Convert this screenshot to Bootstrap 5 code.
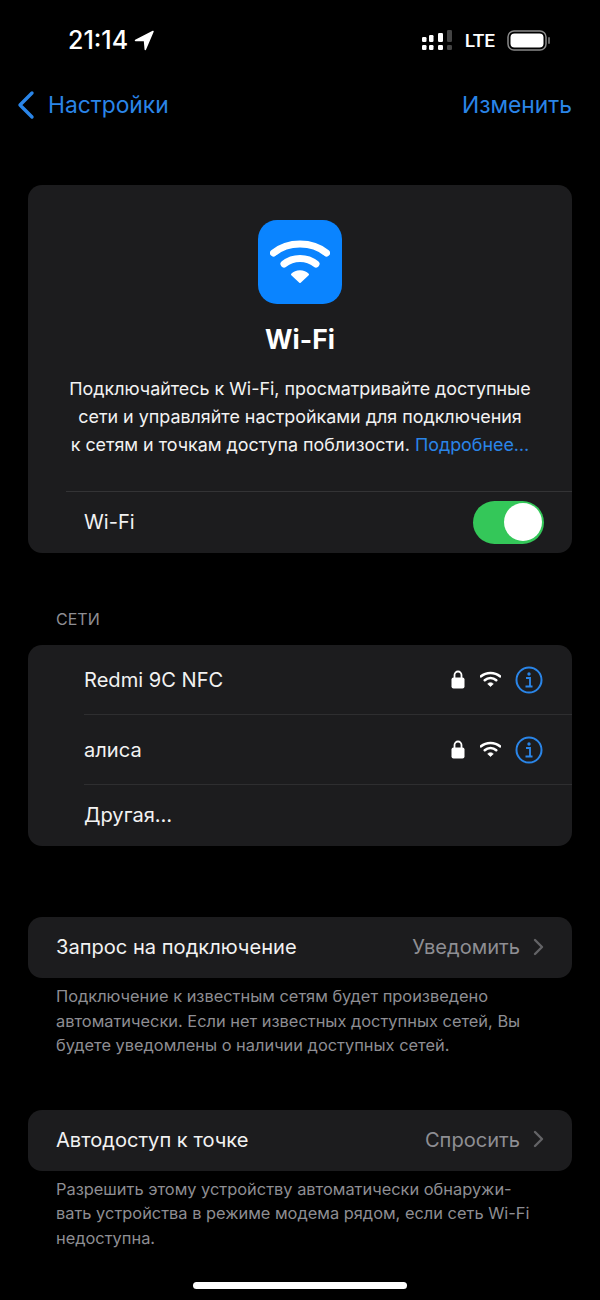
<!DOCTYPE html>
<html lang="ru">
<head>
<meta charset="utf-8">
<title>Wi-Fi</title>
<link rel="stylesheet" href="https://cdn.jsdelivr.net/npm/bootstrap@5.3.0/dist/css/bootstrap.min.css">
<style>
html,body{background:#000;margin:0}
body{width:600px;height:1300px;overflow:hidden;font-family:Inter,"Noto Sans",sans-serif;color:#fff;font-size:20px}
.sbar{height:80px;padding:0 49px 0 68px}
.clock{font-size:25px;font-weight:500;line-height:1}
.lte{font-size:19px;font-weight:500;line-height:1;font-family:Roboto,sans-serif;margin:0 12px}
.navrow{height:50px;padding:0 28px 0 16px;color:#2a85e8;font-size:22.8px}
.backlabel{margin-left:12px}
.panel{background:#1c1c1e;border-radius:14px;margin:0 28px}
.hero{height:368px;margin-top:55px;overflow:hidden}
.appicon{width:84px;height:84px;border-radius:19px;background:#0a84ff;margin-top:35px}
.herotitle{font-size:26.5px;font-weight:700;line-height:34px;margin-top:18px}
.herotext{font-size:17.9px;line-height:28px;margin-top:19px;color:#f2f2f2;padding:0 10px;white-space:nowrap}
.herotext a{color:#2a85e8;text-decoration:none}
.herorow{margin-left:38px;border-top:1px solid #333335;margin-top:32px;height:62px;padding:0 28px 0 18px}
.rowlabel{font-size:20.1px;color:#f2f2f2}
.toggle{width:71px;height:43px;background:#34c759;border-radius:22px;padding:2.5px;margin-bottom:1px}
.knob{width:38px;height:38px;background:#fff;border-radius:50%;margin-left:auto}
.caption{font-size:16px;color:#8e8e93;padding-left:56px;line-height:20px;margin-top:56px;margin-bottom:16px}
.nets{height:201px;overflow:hidden}
.netrow{margin-left:56px;padding-right:29px;border-bottom:1px solid #2e2e30;height:70px}
.netlabel{padding-top:2px}
.netrow.last{border:0;height:61px;padding-bottom:1px}
.netgap{margin-left:15px}
.infogap{margin-left:14px}
.setrow{height:61px;padding:0 27px 0 28px}
.val{color:#8e8e93}
.chevgap{margin-left:11px;margin-bottom:2px}
.foot{font-size:16.4px;line-height:24.5px;color:#8e8e93;padding:0 20px 0 56px;margin-top:6px;white-space:nowrap}
.one{margin-top:71px}
.two{margin-top:52px}
.homebar{width:214px;height:7px;border-radius:4px;background:#fff;margin:32px auto 0}
</style>
</head>
<body>
<div class="sbar d-flex align-items-center justify-content-between">
  <div class="d-flex align-items-center gap-1"><span class="clock">21:14</span>
    <svg width="23" height="23" viewBox="0 0 23 23"><path d="M21 2.500 3.500 11.500h9l.8 9z" fill="#fff" stroke="#fff" stroke-width="1.500" stroke-linejoin="round"/></svg></div>
  <div class="d-flex align-items-center">
    <svg width="31" height="20" viewBox="0 0 31 20" fill="#fff"><rect x="0" y="7" width="4.500" height="5" rx="1.200"/><rect x="0" y="15" width="4.500" height="5" rx="1.200"/><rect x="7" y="5" width="4.500" height="7" rx="1.200"/><rect x="7" y="15" width="4.500" height="5" rx="1.200"/><rect x="16" y="3" width="5" height="9" rx="1.200"/><rect x="16" y="15" width="5" height="5" rx="1.200"/><rect x="25" y="0" width="5" height="12" rx="1.200" fill="#444"/><rect x="25" y="15" width="5" height="5" rx="1.200" fill="#444"/></svg>
    <span class="lte">LTE</span>
    <svg width="44" height="21" viewBox="0 0 44 21"><rect x="1" y="1" width="38" height="19" rx="6" fill="none" stroke="#8a8a8a" stroke-width="1.500"/><rect x="3.500" y="3.500" width="33" height="14" rx="4" fill="#fff"/><rect x="41" y="7" width="2" height="7" rx="1" fill="#666"/></svg>
  </div>
</div>
<div class="navrow d-flex align-items-center justify-content-between">
  <div class="d-flex align-items-center"><svg width="20" height="30" viewBox="0 0 20 30"><path d="M16 3 4 15 16 27" fill="none" stroke="#2a85e8" stroke-width="3.400" stroke-linecap="round" stroke-linejoin="round"/></svg><span class="backlabel">Настройки</span></div>
  <span>Изменить</span>
</div>

<div class="panel hero text-center">
  <div class="appicon mx-auto d-flex align-items-center justify-content-center">
    <svg width="60" height="46" viewBox="0 0 60 46"><path d="M3.500 14C18 2 42 2 56.500 14" fill="none" stroke="#fff" stroke-width="7" stroke-linecap="round"/><path d="M14 25C23 17.500 37 17.500 46 25" fill="none" stroke="#fff" stroke-width="7" stroke-linecap="round"/><path d="M22 35.500C26 31 34 31 38 35.500L30 43z" fill="#fff" stroke="#fff" stroke-width="2" stroke-linejoin="round"/></svg>
  </div>
  <div class="herotitle">Wi-Fi</div>
  <div class="herotext">Подключайтесь к Wi-Fi, просматривайте доступные<br>сети и управляйте настройками для подключения<br>к сетям и точкам доступа поблизости. <a href="#">Подробнее…</a></div>
  <div class="herorow d-flex align-items-center justify-content-between">
    <span class="rowlabel">Wi-Fi</span>
    <div class="toggle d-flex"><div class="knob"></div></div>
  </div>
</div>

<div class="caption">СЕТИ</div>
<div class="panel nets">
  <div class="netrow d-flex align-items-center rowlabel"><span class="me-auto netlabel">Redmi 9C NFC</span>
    <svg width="14" height="19" viewBox="0 0 14 19"><path d="M3.500 8V5a3.500 3.500 0 0 1 7 0v3" fill="none" stroke="#fff" stroke-width="1.800"/><rect x="0.500" y="7.500" width="13" height="11" rx="2" fill="#fff"/></svg>
    <svg class="netgap" width="21" height="17" viewBox="0 0 60 46"><path d="M3 14C18 1 42 1 57 14" fill="none" stroke="#fff" stroke-width="7.500" stroke-linecap="round"/><path d="M13.500 25C23 16.500 37 16.500 46.500 25" fill="none" stroke="#fff" stroke-width="7.500" stroke-linecap="round"/><path d="M22 35.500C26 31 34 31 38 35.500L30 43z" fill="#fff" stroke="#fff" stroke-width="2" stroke-linejoin="round"/></svg>
    <svg class="infogap" width="28" height="28" viewBox="0 0 28 28"><circle cx="14" cy="14" r="12.500" fill="none" stroke="#2a85e8" stroke-width="2"/><circle cx="14" cy="8" r="1.700" fill="#2a85e8"/><path d="M11 12h4v8M10.500 20.500h7" fill="none" stroke="#2a85e8" stroke-width="1.900"/></svg>
  </div>
  <div class="netrow d-flex align-items-center rowlabel"><span class="me-auto netlabel">алиса</span>
    <svg width="14" height="19" viewBox="0 0 14 19"><path d="M3.500 8V5a3.500 3.500 0 0 1 7 0v3" fill="none" stroke="#fff" stroke-width="1.800"/><rect x="0.500" y="7.500" width="13" height="11" rx="2" fill="#fff"/></svg>
    <svg class="netgap" width="21" height="17" viewBox="0 0 60 46"><path d="M3 14C18 1 42 1 57 14" fill="none" stroke="#fff" stroke-width="7.500" stroke-linecap="round"/><path d="M13.500 25C23 16.500 37 16.500 46.500 25" fill="none" stroke="#fff" stroke-width="7.500" stroke-linecap="round"/><path d="M22 35.500C26 31 34 31 38 35.500L30 43z" fill="#fff" stroke="#fff" stroke-width="2" stroke-linejoin="round"/></svg>
    <svg class="infogap" width="28" height="28" viewBox="0 0 28 28"><circle cx="14" cy="14" r="12.500" fill="none" stroke="#2a85e8" stroke-width="2"/><circle cx="14" cy="8" r="1.700" fill="#2a85e8"/><path d="M11 12h4v8M10.500 20.500h7" fill="none" stroke="#2a85e8" stroke-width="1.900"/></svg>
  </div>
  <div class="netrow last d-flex align-items-center rowlabel">Другая…</div>
</div>

<div class="panel setrow one d-flex align-items-center rowlabel"><span class="me-auto">Запрос на подключение</span><span class="val">Уведомить</span>
  <svg class="chevgap" width="14" height="18" viewBox="0 0 14 18"><path d="M4 2l7 7-7 7" fill="none" stroke="#636366" stroke-width="2.400" stroke-linecap="round" stroke-linejoin="round"/></svg></div>
<div class="foot">Подключение к известным сетям будет произведено<br>автоматически. Если нет известных доступных сетей, Вы<br>будете уведомлены о наличии доступных сетей.</div>

<div class="panel setrow two d-flex align-items-center rowlabel"><span class="me-auto">Автодоступ к точке</span><span class="val">Спросить</span>
  <svg class="chevgap" width="14" height="18" viewBox="0 0 14 18"><path d="M4 2l7 7-7 7" fill="none" stroke="#636366" stroke-width="2.400" stroke-linecap="round" stroke-linejoin="round"/></svg></div>
<div class="foot">Разрешить этому устройству автоматически обнаружи-<br>вать устройства в режиме модема рядом, если сеть Wi-Fi<br>недоступна.</div>
<div class="homebar"></div>
<script src="https://cdn.jsdelivr.net/npm/bootstrap@5.3.0/dist/js/bootstrap.bundle.min.js"></script>
</body>
</html>
